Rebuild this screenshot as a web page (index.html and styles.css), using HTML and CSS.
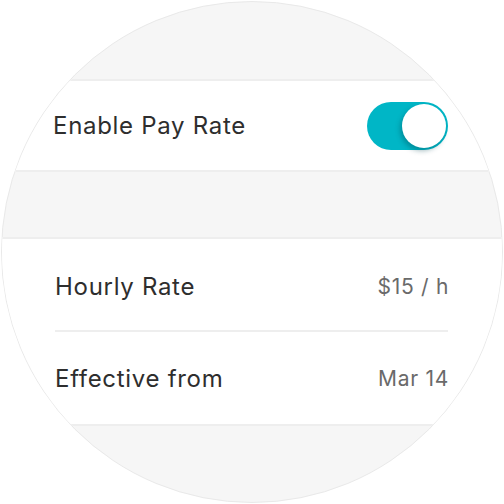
FILE: index.html
```html
<!DOCTYPE html>
<html>
<head>
<meta charset="utf-8">
<link rel="stylesheet" href="styles.css">
</head>
<body>
<div class="circle">
  <div class="gap gap-top"></div>
  <div class="group">
    <div class="row">
      <span class="label">Enable Pay Rate</span>
      <span class="toggle"><span class="knob"></span></span>
    </div>
  </div>
  <div class="gap gap-mid"></div>
  <div class="group">
    <div class="row row-inset first">
      <span class="label">Hourly Rate</span>
      <span class="value">$15 / h</span>
    </div>
    <div class="row row-inset last">
      <span class="label">Effective from</span>
      <span class="value">Mar 14</span>
    </div>
  </div>
</div>
</body>
</html>
```
FILE: styles.css
```css
html, body {
  margin: 0;
  padding: 0;
  background: #ffffff;
}
body {
  width: 504px;
  height: 504px;
  font-family: Inter, "Noto Sans", sans-serif;
}
.circle {
  box-sizing: border-box;
  width: 502px;
  height: 502px;
  margin: 1px;
  border: 1px solid #e9e9e9;
  border-radius: 50%;
  overflow: hidden;
  background: #f6f6f6;
  display: flex;
  flex-direction: column;
}
.gap-top {
  height: 77px;
  flex: none;
}
.gap-mid {
  height: 65px;
  flex: none;
}
.group {
  background: #ffffff;
  border-top: 2px solid #eeeeee;
  border-bottom: 2px solid #eeeeee;
  flex: none;
}
.row {
  height: 89px;
  display: flex;
  align-items: center;
  justify-content: space-between;
  padding: 0 54px 0 51px;
}
.row-inset {
  box-sizing: border-box;
  height: 93px;
  margin: 0 54px 0 53px;
  padding: 0;
  border-bottom: 2px solid #eeeeee;
}
.row-inset.first {
  padding-top: 4px;
}
.row-inset.last {
  height: 92px;
  border-bottom: none;
}
.label {
  font-size: 24px;
  color: #2e2e2e;
  letter-spacing: 0.7px;
}
.value {
  font-size: 21px;
  color: #6a6a6a;
  letter-spacing: 0.7px;
  margin-right: -1px;
}
.toggle {
  position: relative;
  width: 81px;
  height: 48px;
  border-radius: 24px;
  background: #00b6c6;
}
.knob {
  position: absolute;
  right: 2px;
  top: 2px;
  width: 44px;
  height: 44px;
  border-radius: 50%;
  background: #ffffff;
  box-shadow: -2px 3px 5px rgba(0, 70, 80, 0.35);
}
```
